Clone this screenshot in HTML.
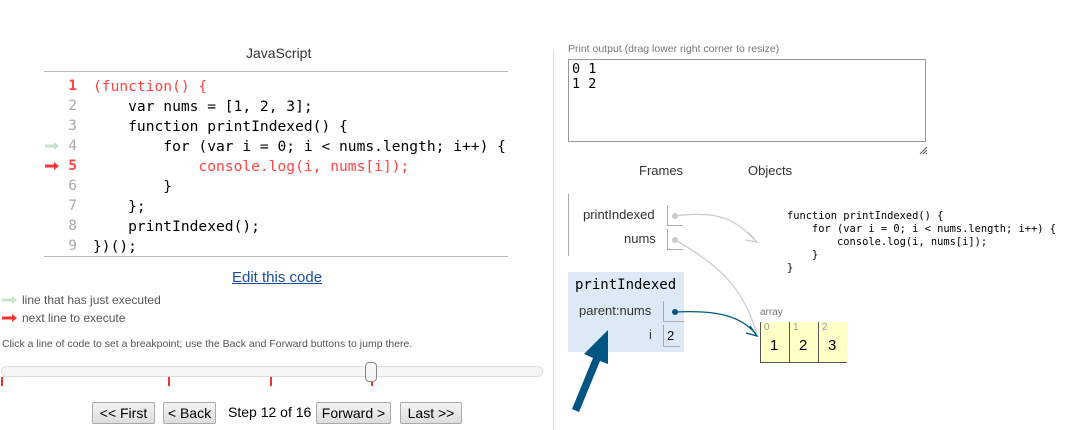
<!DOCTYPE html>
<html><head><style>
body{margin:0;width:1077px;height:430px;background:#fff;position:relative;overflow:hidden;font-family:"Liberation Sans",sans-serif;}
.a{position:absolute;white-space:pre;}
.code{font-family:"DejaVu Sans Mono","Liberation Mono",monospace;font-size:14.6px;color:#000;}
.ln{font-family:"DejaVu Sans Mono",monospace;font-size:14.5px;color:#aaa;width:20px;text-align:right;}
.red{color:#f44;}
.btn{position:absolute;top:402px;height:20px;border:1px solid #aaa;background:linear-gradient(#f4f4f4,#ddd);font-size:14px;line-height:20px;text-align:center;color:#000;border-radius:2px;}
.tick{position:absolute;top:377px;width:2px;height:9px;background:#e33;}
</style></head><body>
<div class="a" style="left:246px;top:45px;font-size:14px;color:#333">JavaScript</div>
<div class="a" style="left:44px;top:71px;width:464px;height:1px;background:#bbb"></div>
<div class="a" style="left:44px;top:256px;width:464px;height:1px;background:#bbb"></div>

<div class="a ln" style="left:57px;top:78px;color:#f44;font-weight:bold">1</div>
<div class="a ln" style="left:57px;top:98px">2</div>
<div class="a ln" style="left:57px;top:118px">3</div>
<div class="a ln" style="left:57px;top:138px">4</div>
<div class="a ln" style="left:57px;top:158px;color:#f44;font-weight:bold">5</div>
<div class="a ln" style="left:57px;top:178px">6</div>
<div class="a ln" style="left:57px;top:198px">7</div>
<div class="a ln" style="left:57px;top:218px">8</div>
<div class="a ln" style="left:57px;top:238px">9</div>

<div class="a code red" style="left:93px;top:78px">(function() {</div>
<div class="a code" style="left:93px;top:98px">    var nums = [1, 2, 3];</div>
<div class="a code" style="left:93px;top:118px">    function printIndexed() {</div>
<div class="a code" style="left:93px;top:138px">        for (var i = 0; i &lt; nums.length; i++) {</div>
<div class="a code red" style="left:93px;top:158px">            console.log(i, nums[i]);</div>
<div class="a code" style="left:93px;top:178px">        }</div>
<div class="a code" style="left:93px;top:198px">    };</div>
<div class="a code" style="left:93px;top:218px">    printIndexed();</div>
<div class="a code" style="left:93px;top:238px">})();</div>

<svg class="a" style="left:0;top:0" width="560" height="430">
<path d="M45 146h10" stroke="#c5e3cc" stroke-width="3"/><path d="M54 142l5 4-5 4z" fill="#c5e3cc"/>
<path d="M45 166h10" stroke="#f33" stroke-width="3"/><path d="M54 162l5 4-5 4z" fill="#f33"/>
<path d="M2 300h11" stroke="#c5e3cc" stroke-width="3"/><path d="M12 296l5 4-5 4z" fill="#c5e3cc"/>
<path d="M2 318h11" stroke="#f33" stroke-width="3"/><path d="M12 314l5 4-5 4z" fill="#f33"/>
</svg>

<div class="a" style="left:232px;top:269px;font-size:15px;color:#1a4d99;text-decoration:underline">Edit this code</div>
<div class="a" style="left:22px;top:293px;font-size:12px;color:#555">line that has just executed</div>
<div class="a" style="left:22px;top:311px;font-size:12px;color:#555">next line to execute</div>
<div class="a" style="left:2px;top:338px;font-size:10.5px;color:#555">Click a line of code to set a breakpoint; use the Back and Forward buttons to jump there.</div>

<div class="a" style="left:1px;top:366px;width:540px;height:9px;border:1px solid #ddd;border-radius:5px;background:#f6f6f6"></div>
<div class="tick" style="left:1px"></div>
<div class="tick" style="left:168px"></div>
<div class="tick" style="left:270px"></div>
<div class="tick" style="left:371px"></div>
<div class="a" style="left:365px;top:362px;width:10px;height:18px;border:1px solid #888;border-radius:4px;background:#f6f6f6"></div>

<div class="btn" style="left:92px;width:61px">&lt;&lt; First</div>
<div class="btn" style="left:163px;width:51px">&lt; Back</div>
<div class="a" style="left:228px;top:404px;font-size:14px">Step 12 of 16</div>
<div class="btn" style="left:316px;width:73px">Forward &gt;</div>
<div class="btn" style="left:400px;width:60px">Last &gt;&gt;</div>

<div class="a" style="left:553px;top:50px;width:1px;height:380px;background:#ddd"></div>

<div class="a" style="left:568px;top:43px;font-size:10.5px;color:#777">Print output (drag lower right corner to resize)</div>
<div class="a" style="left:568px;top:59px;width:356px;height:81px;border:1px solid #999"></div>
<div class="a" style="left:572px;top:62px;font-family:'DejaVu Sans Mono',monospace;font-size:13.5px;line-height:15px">0 1
1 2</div>
<svg class="a" style="left:918px;top:145px" width="10" height="10"><path d="M2 9L9 2M5 9L9 5M8 9L9 8" stroke="#555"/></svg>
<div class="a" style="left:639px;top:163px;font-size:13px;color:#333">Frames</div>
<div class="a" style="left:748px;top:163px;font-size:13px;color:#333">Objects</div>

<div class="a" style="left:568px;top:194px;width:1px;height:62px;background:#aaa"></div>
<div class="a" style="left:583px;top:207px;font-size:13px;color:#333">printIndexed</div>
<div class="a" style="left:624px;top:231px;font-size:13px;color:#333">nums</div>
<div class="a" style="left:667px;top:205px;width:15px;height:20px;border-left:1px solid #aaa;border-bottom:1px solid #aaa"></div>
<div class="a" style="left:667px;top:229px;width:15px;height:20px;border-left:1px solid #aaa;border-bottom:1px solid #aaa"></div>

<div class="a" style="left:787px;top:210px;font-family:'DejaVu Sans Mono',monospace;font-size:10.4px;line-height:13px">function printIndexed() {
    for (var i = 0; i &lt; nums.length; i++) {
        console.log(i, nums[i]);
    }
}</div>

<div class="a" style="left:568px;top:272px;width:116px;height:80px;background:#dde9f4"></div>
<div class="a" style="left:575px;top:277px;font-family:'DejaVu Sans Mono',monospace;font-size:14px">printIndexed</div>
<div class="a" style="left:579px;top:303px;font-size:13px;color:#333">parent:nums</div>
<div class="a" style="left:649px;top:327px;font-size:13px;color:#333">i</div>
<div class="a" style="left:663px;top:301px;width:20px;height:20px;border-left:1px solid #aaa;border-bottom:1px solid #aaa"></div>
<div class="a" style="left:663px;top:325px;width:13px;height:21px;border-left:1px solid #aaa;border-bottom:1px solid #aaa;font-size:13px;padding-left:3px;line-height:21px">2</div>

<div class="a" style="left:760px;top:307px;font-size:10px;color:#777">array</div>
<div class="a" style="left:760px;top:322px;width:87px;height:40px;background:#ffffc6;border-bottom:1px solid #555"></div>
<div class="a" style="left:760px;top:322px;width:1px;height:41px;background:#555"></div>
<div class="a" style="left:789px;top:322px;width:1px;height:41px;background:#555"></div>
<div class="a" style="left:818px;top:322px;width:1px;height:41px;background:#555"></div>
<div class="a" style="left:764px;top:322px;font-size:10px;color:#999">0</div>
<div class="a" style="left:793px;top:322px;font-size:10px;color:#999">1</div>
<div class="a" style="left:822px;top:322px;font-size:10px;color:#999">2</div>
<div class="a" style="left:770px;top:337px;font-size:15px">1</div>
<div class="a" style="left:799px;top:337px;font-size:15px">2</div>
<div class="a" style="left:828px;top:337px;font-size:15px">3</div>

<svg class="a" style="left:0;top:0" width="1077" height="430">
<circle cx="675" cy="216" r="3" fill="#ccc"/>
<path d="M675 216 C720 210 735 220 755 240" stroke="#ccc" fill="none" stroke-width="1.3"/>
<path d="M748 232 L757 242 L745 240" stroke="#ccc" fill="none" stroke-width="1.3"/>
<circle cx="675" cy="240" r="3" fill="#ccc"/>
<path d="M675 240 C720 265 745 290 757 335" stroke="#ccc" fill="none" stroke-width="1.3"/>
<circle cx="675" cy="312" r="3" fill="#005583"/>
<path d="M675 312 C715 310 740 315 756 334" stroke="#005583" fill="none" stroke-width="1.3"/>
<path d="M750 326 L757 336 L746 333" stroke="#005583" fill="none" stroke-width="1.3"/>
<path d="M572 409 L593 358 L584 354 L608 330 L608 364 L600 361 L579 412 Z" fill="#005583"/>
</svg>
</body></html>
